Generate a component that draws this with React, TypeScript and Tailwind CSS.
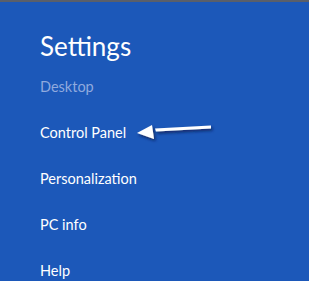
import React from "react";

const items = ["Control Panel", "Personalization", "PC info", "Help"];

const Arrow: React.FC = () => (
  <svg
    className="absolute left-[130px] top-[114px]"
    width="90"
    height="32"
    viewBox="0 0 90 32"
  >
    <defs>
      <filter id="sh" x="-20%" y="-50%" width="140%" height="200%">
        <feDropShadow dx="1.5" dy="2" stdDeviation="1.5" floodColor="#0a1f4a" floodOpacity="0.8" />
      </filter>
    </defs>
    <g filter="url(#sh)" fill="#ffffff">
      <path d="M81 9.5 L81 12.5 L26 15.5 L25 12.5 Z" />
      <path d="M7 17 L22 9 L24 23 Z" />
    </g>
  </svg>
);

const App: React.FC = () => {
  return (
    <div
      className="relative w-[309px] h-[281px] overflow-hidden bg-[#1c58b9] border-t-2 border-[#5a5f6a]"
      style={{ fontFamily: 'Lato, "Noto Sans", sans-serif' }}
    >
      <div className="flex flex-col pl-10 pt-[27px]">
        <h1 className="text-[26px] leading-[34px] text-white font-normal">Settings</h1>
        <div className="mt-[14px] text-[14.5px] leading-5 text-[#90aade]">Desktop</div>
        {items.map((item) => (
          <div key={item} className="mt-[26px] text-[14.5px] leading-5 text-white">
            {item}
          </div>
        ))}
      </div>
      <Arrow />
    </div>
  );
};

export default App;
